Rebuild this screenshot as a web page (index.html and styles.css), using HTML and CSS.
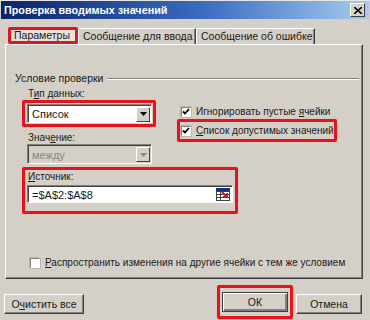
FILE: index.html
```html
<!DOCTYPE html>
<html lang="ru">
<head>
    <meta charset="UTF-8">
    <title>Проверка вводимых значений</title>
    <link rel="stylesheet" href="styles.css">
</head>
<body>

<div class="window">
    <!-- Title bar -->
    <div class="titlebar">
        <span class="title">Проверка вводимых значений</span>
        <span class="close-btn">
            <svg width="8" height="7" viewBox="0 0 8 7"><path d="M0 0L8 7M8 0L0 7" stroke="#000" stroke-width="1.6"/></svg>
        </span>
    </div>

    <!-- Tabs -->
    <div class="tabs">
        <div class="tab active mark">Параметры</div>
        <div class="tab">Сообщение для ввода</div>
        <div class="tab">Сообщение об ошибке</div>
    </div>

    <div class="panel">
        <div class="group-title"><span>Условие проверки</span><i class="etched"></i></div>

        <div class="cols">
            <div class="left-col">
                <div class="label">Т<u>и</u>п данных:</div>
                <div class="mark select-mark">
                    <div class="select">
                        <span>Список</span>
                        <span class="drop"><svg width="7" height="4" viewBox="0 0 7 4"><path d="M0 0H7L3.5 4Z" fill="#000"/></svg></span>
                    </div>
                </div>
                <div class="label">Знач<u>е</u>ние:</div>
                <div class="select disabled">
                    <span>между</span>
                    <span class="drop"><svg width="7" height="4" viewBox="0 0 7 4"><path d="M0 0H7L3.5 4Z" fill="#8a8780"/></svg></span>
                </div>
            </div>

            <div class="right-col">
                <div class="check-row first">
                    <span class="checkbox"><svg width="8" height="8" viewBox="0 0 8 8"><path d="M1 3.5L3 5.5L7 1" fill="none" stroke="#000" stroke-width="1.8"/></svg></span>
                    <span>Игнорировать пустые <u>я</u>чейки</span>
                </div>
                <div class="mark check-mark">
                    <div class="check-row">
                        <span class="checkbox"><svg width="8" height="8" viewBox="0 0 8 8"><path d="M1 3.5L3 5.5L7 1" fill="none" stroke="#000" stroke-width="1.8"/></svg></span>
                        <span><u>С</u>писок допустимых значений</span>
                    </div>
                </div>
            </div>
        </div>

        <div class="mark source-mark">
            <div class="label"><u>И</u>сточник:</div>
            <div class="input">
                <span>=$A$2:$A$8</span>
                <span class="range-icon">
                    <svg width="14" height="13" viewBox="0 0 14 13">
                        <rect x="0.5" y="0.5" width="13" height="12" fill="#fff" stroke="#404040"/>
                        <path d="M0 3.5H14M0 6.5H14M0 9.5H14M4.5 0V13" stroke="#404040" stroke-width="1"/>
                        <rect x="0" y="0" width="14" height="3" fill="#1c2f7a"/>
                        <path d="M6 4L11 9M11 5V9H7" fill="none" stroke="#d01818" stroke-width="2"/>
                    </svg>
                </span>
            </div>
        </div>

        <div class="check-row spread">
            <span class="checkbox"></span>
            <span><u>Р</u>аспространить изменения на другие ячейки с тем же условием</span>
        </div>
    </div>

    <!-- Buttons -->
    <div class="buttons">
        <button class="btn">О<u>ч</u>истить все</button>
        <div class="mark ok-mark"><button class="btn">ОК</button></div>
        <button class="btn">Отмена</button>
    </div>
</div>

</body>
</html>
```

FILE: styles.css
```css
body {
    margin: 0;
    padding: 0;
    background-color: #d4d0c8;
    font-family: "Liberation Sans", Arial, sans-serif;
    font-size: 10px;
    color: #1a1a1a;
}

.window {
    width: 370px;
    height: 320px;
    overflow: hidden;
    background-color: #d4d0c8;
    box-sizing: border-box;
    border-top: 1px solid #e8e6e0;
}

u {
    text-decoration: underline;
    text-underline-offset: 1px;
}

/* Title bar */
.titlebar {
    height: 18px;
    margin: 0 1px;
    background: linear-gradient(to right, #0a246a, #3a6cc0 55%, #a6caf0);
    display: flex;
    align-items: center;
    justify-content: space-between;
    padding: 0 4px 0 3px;
}

.titlebar .title {
    color: #fff;
    font-weight: bold;
    font-size: 10.8px;
}

.close-btn {
    width: 13px;
    height: 12px;
    background-color: #d4d0c8;
    border: 1px solid;
    border-color: #fff #404040 #404040 #fff;
    display: flex;
    align-items: center;
    justify-content: center;
}

/* Red highlight frames */
.mark {
    border: 3px solid #e3141c;
    border-radius: 2px;
    box-shadow: 0 0 1px #f08080;
}

/* Tabs */
.tabs {
    display: flex;
    align-items: flex-end;
    margin-top: 8px;
    padding-left: 8px;
    height: 17px;
    font-size: 10.5px;
}

.tab {
    height: 16px;
    line-height: 15px;
    padding: 0 4px;
    box-sizing: border-box;
    border-top: 1px solid #fff;
    border-left: 1px solid #fff;
    border-right: 1px solid #404040;
    box-shadow: inset -1px 0 #808080;
    white-space: nowrap;
    text-align: center;
}

.tab.active.mark {
    height: 17px;
    line-height: 11px;
    width: 70px;
    padding: 0 0 0 3px;
    text-align: left;
    background-color: #e6e2dc;
    border: 3px solid #e3141c;
    box-shadow: none;
}

.tabs .tab:nth-child(2) {
    width: 118px;
}

.tabs .tab:nth-child(3) {
    width: 119px;
}

/* Tab panel */
.panel {
    margin: 0 7px 0 5px;
    border: 1px solid;
    border-color: #fff #404040 #404040 #fff;
    box-shadow: inset -1px -1px #808080;
    padding-bottom: 9px;
}

.group-title {
    display: flex;
    align-items: center;
    margin-top: 27px;
    padding-left: 9px;
    line-height: 12px;
    font-size: 10.5px;
}

.group-title .etched {
    flex: 1;
    height: 0;
    margin: 1px 3px 0 4px;
    border-top: 1px solid #808080;
    border-bottom: 1px solid #fff;
}

.cols {
    display: flex;
    padding-left: 16px;
}

.left-col {
    width: 134px;
}

.label {
    line-height: 13px;
    padding-left: 6px;
}

.left-col .label:first-child {
    margin-top: 3px;
}

.left-col .label {
    margin-top: 4px;
}

.select-mark {
    padding: 1px 1px 1px 2px;
}

.select {
    width: 125px;
    height: 19px;
    box-sizing: border-box;
    background-color: #fff;
    border: 1px solid;
    border-color: #808080 #fff #fff #808080;
    box-shadow: inset 1px 1px #404040;
    display: flex;
    align-items: center;
    justify-content: space-between;
    padding: 1px 1px 0 4px;
    font-size: 11px;
}

.select.disabled {
    margin-left: 5px;
    background-color: #d4d0c8;
    color: #8a8780;
    height: 20px;
}

.drop {
    width: 14px;
    height: 15px;
    box-sizing: border-box;
    background-color: #d4d0c8;
    border: 1px solid;
    border-color: #fff #404040 #404040 #fff;
    display: flex;
    align-items: center;
    justify-content: center;
}

/* Checkboxes */
.right-col {
    margin-left: 21px;
}

.check-row {
    display: flex;
    align-items: center;
    line-height: 13px;
    white-space: nowrap;
}

.check-row.first {
    margin-top: 21px;
    padding-left: 4px;
}

.checkbox {
    flex-shrink: 0;
    width: 10px;
    height: 10px;
    box-sizing: border-box;
    background-color: #fff;
    border: 1px solid;
    border-color: #808080 #fff #fff #808080;
    box-shadow: 0 0 0 0.5px #a09c94;
    margin-right: 5px;
    display: flex;
    align-items: center;
    justify-content: center;
}

.check-mark {
    margin-top: 1px;
    width: 160px;
    box-sizing: border-box;
    padding: 2px 3px 2px 1px;
}

/* Source field */
.source-mark {
    margin: 3px 0 0 16px;
    width: 216px;
    box-sizing: border-box;
    padding: 0 2px 8px 2px;
}

.source-mark .label {
    padding-left: 1px;
}

.input {
    margin-top: 2px;
    height: 18px;
    box-sizing: border-box;
    background-color: #fff;
    border: 1px solid;
    border-color: #808080 #fff #fff #808080;
    box-shadow: inset 1px 1px #404040;
    display: flex;
    align-items: center;
    justify-content: space-between;
    padding: 1px 2px 0 4px;
    font-size: 11px;
}

.range-icon {
    display: flex;
}

.check-row.spread {
    margin: 42px 0 0 24px;
}

/* Bottom buttons */
.buttons {
    display: flex;
    align-items: flex-start;
    margin-top: 6px;
    padding: 0 8px 0 4px;
}

.btn {
    height: 20px;
    font-family: "Liberation Sans", Arial, sans-serif;
    font-size: 10.5px;
    background-color: #d4d0c8;
    border: 1px solid;
    border-color: #fff #404040 #404040 #fff;
    box-shadow: inset -1px -1px #808080;
    padding: 0;
    color: #1a1a1a;
}

.buttons > .btn:first-child {
    width: 80px;
    margin-top: 9px;
}

.ok-mark {
    margin-left: auto;
    padding: 4px 2px 4px 2px;
}

.ok-mark .btn {
    width: 66px;
    border-color: #404040;
    box-shadow: inset 1px 1px #fff, inset -2px -2px #808080;
}

.buttons > .btn:last-child {
    width: 66px;
    margin: 9px 0 0 3px;
}
```
